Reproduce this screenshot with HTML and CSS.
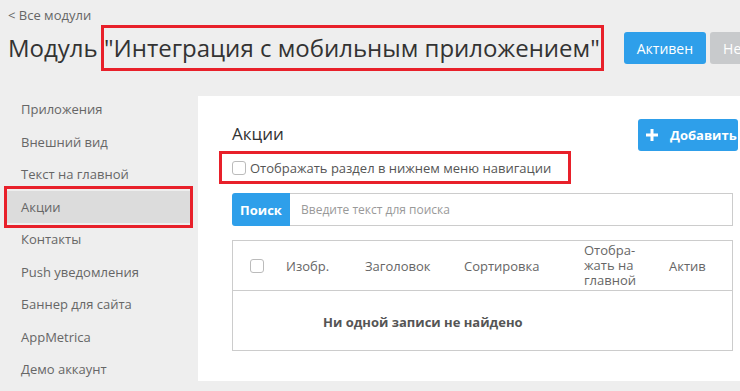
FILE: index.html
```html
<!DOCTYPE html>
<html lang="ru">
<head>
<meta charset="utf-8">
<title>Модуль</title>
<link rel="stylesheet" href="styles.css">
</head>
<body>
<div class="top">
  <a class="back" href="#">&lt; Все модули</a>
  <div class="title-row">
    <h1 class="title">Модуль <span class="mark">"Интеграция с мобильным приложением"</span></h1>
    <div class="actions">
      <button class="btn btn-blue">Активен</button>
      <button class="btn btn-gray">Неактивен</button>
    </div>
  </div>
</div>
<div class="layout">
  <nav class="side">
    <div class="side-item">Приложения</div>
    <div class="side-item">Внешний вид</div>
    <div class="side-item">Текст на главной</div>
    <div class="side-item active">Акции</div>
    <div class="side-item">Контакты</div>
    <div class="side-item">Push уведомления</div>
    <div class="side-item">Баннер для сайта</div>
    <div class="side-item">AppMetrica</div>
    <div class="side-item">Демо аккаунт</div>
  </nav>
  <main class="panel">
    <div class="head-row">
      <h2 class="head">Акции</h2>
      <button class="btn-add"><svg width="12" height="12" viewBox="0 0 12 12"><path d="M6 0v12M0 6h12" stroke="#fff" stroke-width="3"/></svg><span>Добавить</span></button>
    </div>
    <label class="check-row"><span class="cb"></span><span class="check-label">Отображать раздел в нижнем меню навигации</span></label>
    <div class="search">
      <button class="search-btn">Поиск</button>
      <div class="search-input">Введите текст для поиска</div>
    </div>
    <div class="table">
      <div class="thead">
        <div class="th th-cb"><span class="cb"></span></div>
        <div class="th">Изобр.</div>
        <div class="th">Заголовок</div>
        <div class="th">Сортировка</div>
        <div class="th th-multi">Отобра-<br>жать на<br>главной</div>
        <div class="th">Актив</div>
      </div>
      <div class="tbody">Ни одной записи не найдено</div>
    </div>
  </main>
</div>
</body>
</html>
```
FILE: styles.css
```css
* { box-sizing: border-box; }
html, body { margin: 0; padding: 0; }
body {
  width: 740px;
  height: 391px;
  overflow: hidden;
  background: #eeeeee;
  font-family: "Open Sans", "Noto Sans", sans-serif;
  color: #333;
}
.top { padding: 6px 0 0 8px; }
.back {
  display: block;
  font-size: 13px;
  line-height: 18px;
  color: #666;
  text-decoration: none;
}
.title-row {
  display: flex;
  align-items: center;
  margin-top: 1px;
  height: 46px;
  margin-bottom: 22px;
  white-space: nowrap;
}
.title {
  margin: 0;
  font-size: 24px;
  font-weight: 400;
  line-height: 34px;
  color: #333;
}
.mark {
  display: inline-block;
  margin-left: -3px;
  border: 3px solid #e8202a;
  padding: 3px 1px 3px 0;
  line-height: 34px;
}
.actions { display: flex; gap: 4px; margin-left: 20px; }
.btn {
  height: 32px;
  border: none;
  border-radius: 3px;
  padding: 0 13px;
  font-family: inherit;
  font-size: 14px;
  color: #fff;
}
.btn-blue { background: #2e9fea; }
.btn-gray { background: #c8cacc; }
.layout { display: flex; align-items: flex-start; }
.side {
  width: 198px;
  flex-shrink: 0;
  padding-left: 7px;
}
.side-item {
  width: 183px;
  height: 32.5px;
  line-height: 32.5px;
  padding-left: 14px;
  font-size: 13px;
  color: #666;
}
.side-item.active {
  background: #dcdcdc;
  position: relative;
}
.side-item.active::after {
  content: "";
  position: absolute;
  top: -5px; bottom: -5px; left: -3px; right: -3px;
  border: 3px solid #e8202a;
}
.panel {
  flex: 1;
  background: #fff;
  margin-top: 3px;
  height: 285px;
  padding: 23px 7px 0 34px;
}
.head-row {
  display: flex;
  justify-content: space-between;
  align-items: center;
  height: 32px;
  margin-right: -5px;
}
.head {
  margin: 0;
  font-size: 17px;
  font-weight: 400;
  color: #333;
  line-height: 24px;
  margin-top: -3px;
}
.btn-add {
  display: flex;
  align-items: center;
  gap: 12px;
  width: 100px;
  height: 32px;
  padding: 0 0 0 8px;
  border: none;
  border-radius: 3px;
  background: #2e9fea;
  color: #fff;
  font-family: inherit;
  font-size: 13px;
  font-weight: 700;
}
.check-row {
  display: flex;
  align-items: center;
  width: 352px;
  height: 33px;
  margin-left: -13px;
  border: 3px solid #e8202a;
  padding-left: 10px;
}
.cb {
  display: inline-block;
  width: 14px;
  height: 14px;
  border: 1px solid #bbb;
  border-radius: 3px;
  background: #fff;
}
.check-label {
  margin-left: 4px;
  font-size: 13px;
  color: #555;
}
.search {
  display: flex;
  height: 33px;
  margin-top: 9px;
}
.search-btn {
  width: 58px;
  border: none;
  border-radius: 3px 0 0 3px;
  background: #2e9fea;
  color: #fff;
  font-family: inherit;
  font-size: 13px;
  font-weight: 700;
}
.search-input {
  flex: 1;
  border: 1px solid #ccc;
  border-left: none;
  padding-left: 11px;
  font-size: 12px;
  line-height: 31px;
  color: #999;
}
.table {
  margin-top: 14px;
  border: 1px solid #ccc;
}
.thead {
  display: grid;
  grid-template-columns: 53px 79px 99px 120px 85px 1fr;
  align-items: center;
  height: 50px;
  border-bottom: 1px solid #ccc;
  font-size: 13px;
  color: #666;
}
.th-cb { padding-left: 17px; display: flex; }
.th-multi { line-height: 15px; }
.tbody {
  height: 59px;
  padding-top: 4px;
  line-height: 55px;
  padding-left: 90px;
  font-size: 13px;
  font-weight: 700;
  color: #555;
}
```
